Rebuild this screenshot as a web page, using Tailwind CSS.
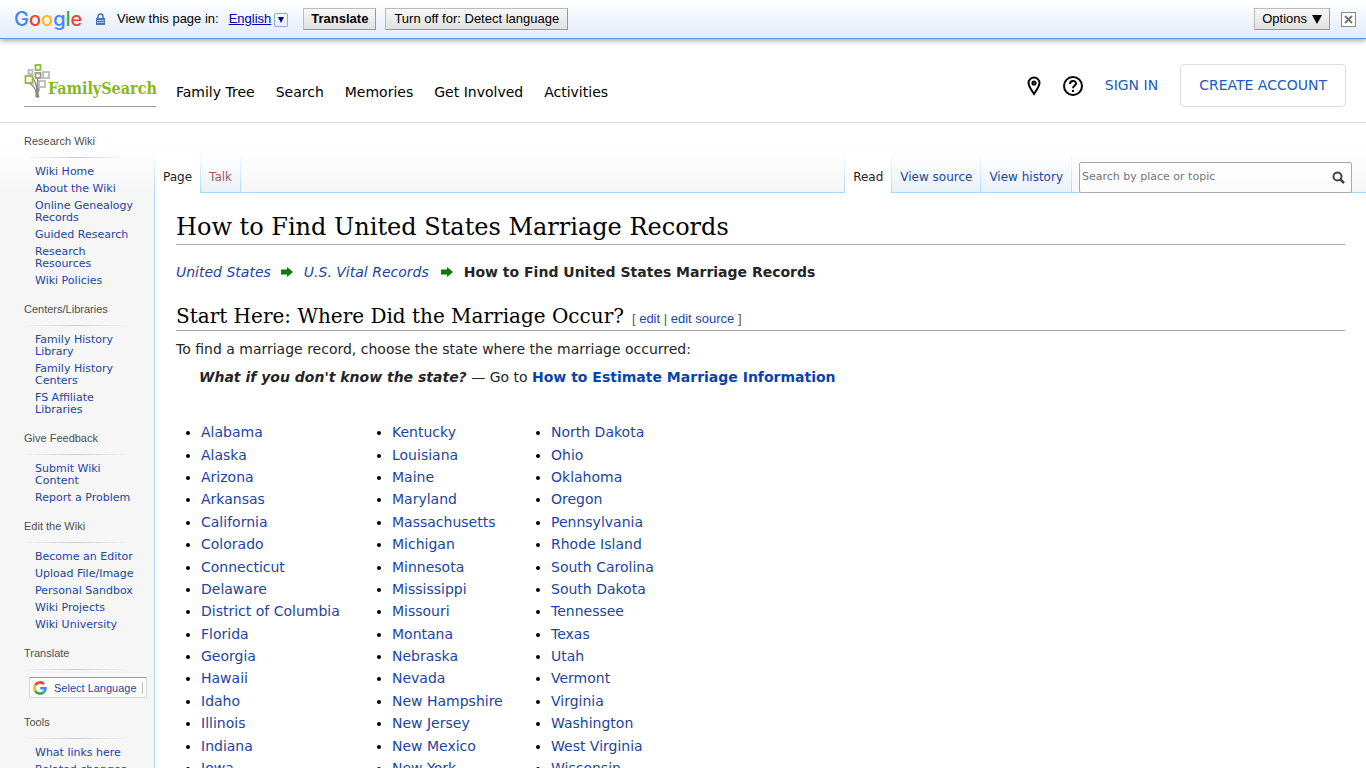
<!DOCTYPE html>
<html lang="en">
<head>
    <meta charset="UTF-8">
    <meta name="viewport" content="width=device-width, initial-scale=1.0">
    <title>How to Find United States Marriage Records</title>
    <script src="https://cdn.jsdelivr.net/npm/@tailwindcss/browser@4"></script>
</head>
<body class="bg-white text-[#252525] font-['DejaVu_Sans',sans-serif]">

    <!-- Translate bar -->
    <div class="relative z-10 flex items-center h-[39px] px-[14px] border-b border-[#6b90da] bg-linear-to-b from-white to-[#e2ecf9] shadow-[0_1px_6px_rgba(0,0,0,0.45)] text-[13px] text-black font-['Liberation_Sans',Arial,sans-serif]">
        <a href="#" class="w-[81px] text-[20px] leading-[28px] font-medium font-['Inter',sans-serif]" aria-label="Google"><span class="text-[#4285f4]">G</span><span class="text-[#ea4335]">o</span><span class="text-[#fbbc05]">o</span><span class="text-[#4285f4]">g</span><span class="text-[#34a853]">l</span><span class="text-[#ea4335]">e</span></a>
        <svg class="w-[11px] h-[12px] mr-[11px]" viewBox="0 0 11 12">
            <path d="M3 6V3.5a2.5 2.5 0 0 1 5 0V6" fill="none" stroke="#4a6fae" stroke-width="1.5"/>
            <rect x="1" y="5" width="9" height="7" fill="#4a78bd"/>
            <path d="M2 7.500h7M2 9.500h7" stroke="#a9c4ea"/>
        </svg>
        <span class="mr-[10px]">View this page in:</span>
        <button class="flex items-center gap-[3px] text-[#0000aa] mr-[15px]">
            <span class="underline">English</span>
            <span class="flex items-center justify-center w-[14px] h-[14px] mt-[2px] border border-[#8fa8d8] rounded-[2px]">
                <svg class="w-[6px] h-[6px]" viewBox="0 0 6 6"><path d="M0 0h6L3 6z" fill="#0000aa"/></svg>
            </span>
        </button>
        <button class="h-[22px] px-[7px] mr-[9px] border border-[#bbb] border-r-[#999] border-b-[#999] bg-linear-to-b from-[#f8f8f8] to-[#e0e0e0] font-bold">Translate</button>
        <button class="h-[22px] px-2 border border-[#bbb] border-r-[#999] border-b-[#999] bg-linear-to-b from-[#f8f8f8] to-[#e0e0e0]">Turn off for: Detect language</button>
        <button class="flex items-center gap-[5px] h-[22px] px-[7px] ml-auto mr-[11px] border border-[#bbb] border-r-[#999] border-b-[#999] bg-linear-to-b from-[#f8f8f8] to-[#e0e0e0]">
            Options
            <svg class="w-[10px] h-[9px]" viewBox="0 0 10 9"><path d="M0 0h10L5 9z"/></svg>
        </button>
        <button class="w-[15px] h-[15px] -mr-1 border border-[#888] bg-white" aria-label="Close">
            <svg class="w-[13px] h-[13px]" viewBox="0 0 13 13"><path d="M3 3l7 7M10 3l-7 7" stroke="#777" stroke-width="2"/></svg>
        </button>
    </div>

    <!-- Site header -->
    <header class="flex justify-between h-[84px] pl-6 pr-5 border-b border-[#ddd]">
        <div class="flex">
            <a href="#" class="flex items-end self-start w-[132px] h-[43px] mt-[25px] pb-[7px] mr-5 border-b border-[#999]" aria-label="FamilySearch">
                <svg class="w-[27px] h-[36px] -mr-[3px] shrink-0" viewBox="0 0 27 36" fill="none">
                    <path d="M13.500 35c-1.500-4-.5-7 1-9.500l3-3.500M12 34c1-6-1-9-4-12l-4-3M13 29c0-7-2-11-5-15M13.500 14v14" stroke="#8f8a82" stroke-width="1.300"/>
                    <path d="M11.500 26c1 4 .5 6 2 9l2-1c-1.500-3-1-5.500.5-8" fill="#8f8a82"/>
                    <g stroke-width="1.800">
                        <rect x="11.500" y="2" width="5" height="5" stroke="#8dbb45"/>
                        <rect x="4.500" y="7" width="4" height="4" stroke="#bbb"/>
                        <rect x="11.500" y="10" width="5" height="5" stroke="#9a958c" fill="#fff"/>
                        <rect x="19" y="9" width="6" height="6" stroke="#bbb" fill="#fff"/>
                        <rect x="1.500" y="13" width="7" height="7" stroke="#8dbb45" fill="#fff"/>
                        <rect x="15" y="18" width="6" height="6" stroke="#bbb" fill="#fff"/>
                    </g>
                </svg>
                <span class="text-[16px] leading-[20px] font-bold text-[#87b914] font-['DejaVu_Serif_Condensed','DejaVu_Serif',serif]">FamilySearch</span>
            </a>
            <nav class="flex gap-[21px] pt-[42px] text-[14px] leading-[22px] text-black">
                <a href="#">Family Tree</a>
                <a href="#">Search</a>
                <a href="#">Memories</a>
                <a href="#">Get Involved</a>
                <a href="#">Activities</a>
            </nav>
        </div>
        <div class="flex items-center h-[43px] mt-[25px] text-[14px] text-[#2258c4]">
            <a href="#" class="mr-[22px]" aria-label="Locations">
                <svg class="w-[14px] h-[20px]" viewBox="0 0 14 20" fill="none" stroke="#000" stroke-width="2">
                    <path d="M7 18C4 13.500 1.500 10 1.500 7a5.500 5.500 0 0 1 11 0c0 3-2.500 6.500-5.500 11z"/>
                    <circle cx="7" cy="7" r="1.600"/>
                </svg>
            </a>
            <a href="#" class="mr-[22px]" aria-label="Help">
                <svg class="w-[20px] h-[20px]" viewBox="0 0 20 20" fill="none" stroke="#000" stroke-width="2">
                    <circle cx="10" cy="10" r="9"/>
                    <path d="M7 8c0-4 6-4 6-.5C13 9.500 10 9.500 10 12.200M10 14v2"/>
                </svg>
            </a>
            <a href="#" class="mr-[22px]">SIGN IN</a>
            <a href="#" class="flex items-center h-[43px] px-[18px] border border-[#ddd] rounded-[4px]">CREATE ACCOUNT</a>
        </div>
    </header>

    <div class="flex bg-[linear-gradient(#fff_25px,#f6f6f6_70px)]">

        <!-- Sidebar -->
        <aside class="w-[154px] shrink-0 pl-6 pt-[10px] text-[11px] leading-[12px] text-[#0645ad]">
            <section class="mb-[10px]">
                <h3 class="leading-[16px] text-[#4d4d4d] font-['Liberation_Sans',Arial,sans-serif]">Research Wiki</h3>
                <div class="h-px w-[104px] mt-2 mb-2 bg-linear-to-r from-transparent via-[#c8ccd1] to-transparent"></div>
                <ul class="-mb-px pl-[11px] text-[#1c44a0]">
                    <li class="pb-[5px]"><a href="#">Wiki Home</a></li>
                    <li class="pb-[5px]"><a href="#">About the Wiki</a></li>
                    <li class="pb-[5px]"><a href="#">Online Genealogy<br>Records</a></li>
                    <li class="pb-[5px]"><a href="#">Guided Research</a></li>
                    <li class="pb-[5px]"><a href="#">Research<br>Resources</a></li>
                    <li class="pb-[5px]"><a href="#">Wiki Policies</a></li>
                </ul>
            </section>
            <section class="mb-[10px]">
                <h3 class="leading-[16px] text-[#4d4d4d] font-['Liberation_Sans',Arial,sans-serif]">Centers/Libraries</h3>
                <div class="h-px w-[104px] mt-2 mb-2 bg-linear-to-r from-transparent via-[#c8ccd1] to-transparent"></div>
                <ul class="-mb-px pl-[11px] text-[#1c44a0]">
                    <li class="pb-[5px]"><a href="#">Family History<br>Library</a></li>
                    <li class="pb-[5px]"><a href="#">Family History<br>Centers</a></li>
                    <li class="pb-[5px]"><a href="#">FS Affiliate<br>Libraries</a></li>
                </ul>
            </section>
            <section class="mb-[10px]">
                <h3 class="leading-[16px] text-[#4d4d4d] font-['Liberation_Sans',Arial,sans-serif]">Give Feedback</h3>
                <div class="h-px w-[104px] mt-2 mb-2 bg-linear-to-r from-transparent via-[#c8ccd1] to-transparent"></div>
                <ul class="-mb-px pl-[11px] text-[#1c44a0]">
                    <li class="pb-[5px]"><a href="#">Submit Wiki<br>Content</a></li>
                    <li class="pb-[5px]"><a href="#">Report a Problem</a></li>
                </ul>
            </section>
            <section class="mb-[10px]">
                <h3 class="leading-[16px] text-[#4d4d4d] font-['Liberation_Sans',Arial,sans-serif]">Edit the Wiki</h3>
                <div class="h-px w-[104px] mt-2 mb-2 bg-linear-to-r from-transparent via-[#c8ccd1] to-transparent"></div>
                <ul class="-mb-px pl-[11px] text-[#1c44a0]">
                    <li class="pb-[5px]"><a href="#">Become an Editor</a></li>
                    <li class="pb-[5px]"><a href="#">Upload File/Image</a></li>
                    <li class="pb-[5px]"><a href="#">Personal Sandbox</a></li>
                    <li class="pb-[5px]"><a href="#">Wiki Projects</a></li>
                    <li class="pb-[5px]"><a href="#">Wiki University</a></li>
                </ul>
            </section>
            <section class="mb-4">
                <h3 class="leading-[16px] text-[#4d4d4d] font-['Liberation_Sans',Arial,sans-serif]">Translate</h3>
                <div class="h-px w-[104px] mt-2 mb-[7px] bg-linear-to-r from-transparent via-[#c8ccd1] to-transparent"></div>
                <button class="flex items-center w-[118px] h-[21px] ml-[5px] pl-[3px] border border-[#d5d5d5] border-t-[#9b9b9b] bg-white text-[#1c44a0] whitespace-nowrap font-['Liberation_Sans',Arial,sans-serif]">
                    <svg class="w-[14px] h-[14px] mr-[7px]" viewBox="0 0 14 14" fill="none" stroke-width="2.600">
                        <path d="M2.200 4.200A5.600 5.600 0 0 1 11 3" stroke="#ea4335"/>
                        <path d="M2.200 4.200a5.600 5.600 0 0 0 0 5.600" stroke="#fbbc05"/>
                        <path d="M2.200 9.800A5.600 5.600 0 0 0 10.700 11.300" stroke="#34a853"/>
                        <path d="M10.700 11.300c1.300-1 1.800-2.600 1.800-4.100H7.200" stroke="#4285f4"/>
                    </svg>
                    Select Language
                    <span class="w-px h-3 ml-[5px] bg-[#bbb]"></span>
                </button>
            </section>
            <section>
                <h3 class="leading-[16px] text-[#4d4d4d] font-['Liberation_Sans',Arial,sans-serif]">Tools</h3>
                <div class="h-px w-[104px] mt-2 mb-2 bg-linear-to-r from-transparent via-[#c8ccd1] to-transparent"></div>
                <ul class="-mb-px pl-[11px] text-[#1c44a0]">
                    <li class="pb-[5px]"><a href="#">What links here</a></li>
                    <li class="pb-[5px]"><a href="#">Related changes</a></li>
                </ul>
            </section>
        </aside>

        <div class="flex flex-col flex-1 min-w-0">
            <!-- Page tabs and search -->
            <div class="flex justify-between items-end h-[70px] shrink-0 pr-[14px] shadow-[inset_0_-1px_#a7d7f9] text-[12px] leading-[16px] text-[#1c44a0]">
                <nav class="flex h-[40px]">
                    <a href="#" class="pt-[16px] px-2 border-l [border-image:linear-gradient(#fff,#a7d7f9)_1] bg-white text-[#222]">Page</a>
                    <a href="#" class="pt-[16px] px-2 border-x [border-image:linear-gradient(#fff,#a7d7f9)_1] bg-linear-to-b from-white to-[#e8f2f8] shadow-[inset_0_-1px_#a7d7f9] text-[#a55858]">Talk</a>
                </nav>
                <div class="flex items-end">
                    <nav class="flex h-[40px] mr-[7px]">
                        <a href="#" class="pt-[16px] px-2 border-l [border-image:linear-gradient(#fff,#a7d7f9)_1] bg-white text-[#222]">Read</a>
                        <a href="#" class="pt-[16px] px-2 border-l [border-image:linear-gradient(#fff,#a7d7f9)_1] bg-linear-to-b from-white to-[#e8f2f8] shadow-[inset_0_-1px_#a7d7f9]">View source</a>
                        <a href="#" class="pt-[16px] px-2 border-x [border-image:linear-gradient(#fff,#a7d7f9)_1] bg-linear-to-b from-white to-[#e8f2f8] shadow-[inset_0_-1px_#a7d7f9]">View history</a>
                    </nav>
                    <form class="flex items-center w-[273px] h-[31px] pl-[2px] pr-[6px] pb-px border border-[#aaa] rounded-[2px] bg-white/60">
                        <input type="search" aria-label="Search" placeholder="Search by place or topic" class="flex-1 min-w-0 text-[11px] placeholder:text-[#757575] outline-none">
                        <button aria-label="Go">
                            <svg class="w-[13px] h-[13px]" viewBox="0 0 13 13" fill="none" stroke="#444" stroke-width="2"><circle cx="5.500" cy="5.500" r="4"/><path d="M8.500 8.500l3.500 3.500" stroke-width="2.500"/></svg>
                        </button>
                    </form>
                </div>
            </div>

            <!-- Article -->
            <main class="flex-1 px-[21px] border-l border-[#a7d7f9] bg-white text-[14px] leading-[1.6]">
                <h1 class="h-[52px] pt-[16px] border-b border-[#aaa] text-[24px] leading-[36px] text-black font-['DejaVu_Serif',serif]">How to Find United States Marriage Records</h1>
                <p class="flex items-center mt-[16px]">
                    <a href="#" class="italic text-[#1c44a0]">United States</a>
                    <svg class="w-[12px] h-[11px] ml-[10px] mr-[11px]" viewBox="0 0 12 11"><path d="M0 2.500h6V0l6 5-6 5V7.500H0z" fill="#008000"/></svg>
                    <a href="#" class="italic text-[#1c44a0]">U.S. Vital Records</a>
                    <svg class="w-[12px] h-[11px] ml-[12px] mr-[11px]" viewBox="0 0 12 11"><path d="M0 2.500h6V0l6 5-6 5V7.500H0z" fill="#008000"/></svg>
                    <b>How to Find United States Marriage Records</b>
                </p>
                <h2 class="flex items-baseline h-[31px] mt-[17px] border-b border-[#aaa] text-[20px] leading-[32px] text-black font-['DejaVu_Serif',serif]">
                    Start Here: Where Did the Marriage Occur?
                    <span class="ml-2 text-[13px] text-[#555] font-['Liberation_Sans',Arial,sans-serif]">[ <a href="#" class="text-[#1c44a0]">edit</a> | <a href="#" class="text-[#1c44a0]">edit source</a> ]</span>
                </h2>
                <p class="mt-[7px]">To find a marriage record, choose the state where the marriage occurred:</p>
                <p class="mt-[5px] ml-[23px]"><b><i>What if you don't know the state?</i></b> — Go to <a href="#" class="font-bold text-[#0645ad]">How to Estimate Marriage Information</a></p>
                <div class="flex mt-[33px] pl-[25px] text-[#1c44a0]">
                    <ul class="w-[191px] list-disc marker:text-black">
                        <li><a href="#">Alabama</a></li>
                        <li><a href="#">Alaska</a></li>
                        <li><a href="#">Arizona</a></li>
                        <li><a href="#">Arkansas</a></li>
                        <li><a href="#">California</a></li>
                        <li><a href="#">Colorado</a></li>
                        <li><a href="#">Connecticut</a></li>
                        <li><a href="#">Delaware</a></li>
                        <li><a href="#">District of Columbia</a></li>
                        <li><a href="#">Florida</a></li>
                        <li><a href="#">Georgia</a></li>
                        <li><a href="#">Hawaii</a></li>
                        <li><a href="#">Idaho</a></li>
                        <li><a href="#">Illinois</a></li>
                        <li><a href="#">Indiana</a></li>
                        <li><a href="#">Iowa</a></li>
                    </ul>
                    <ul class="w-[159px] list-disc marker:text-black">
                        <li><a href="#">Kentucky</a></li>
                        <li><a href="#">Louisiana</a></li>
                        <li><a href="#">Maine</a></li>
                        <li><a href="#">Maryland</a></li>
                        <li><a href="#">Massachusetts</a></li>
                        <li><a href="#">Michigan</a></li>
                        <li><a href="#">Minnesota</a></li>
                        <li><a href="#">Mississippi</a></li>
                        <li><a href="#">Missouri</a></li>
                        <li><a href="#">Montana</a></li>
                        <li><a href="#">Nebraska</a></li>
                        <li><a href="#">Nevada</a></li>
                        <li><a href="#">New Hampshire</a></li>
                        <li><a href="#">New Jersey</a></li>
                        <li><a href="#">New Mexico</a></li>
                        <li><a href="#">New York</a></li>
                    </ul>
                    <ul class="list-disc marker:text-black">
                        <li><a href="#">North Dakota</a></li>
                        <li><a href="#">Ohio</a></li>
                        <li><a href="#">Oklahoma</a></li>
                        <li><a href="#">Oregon</a></li>
                        <li><a href="#">Pennsylvania</a></li>
                        <li><a href="#">Rhode Island</a></li>
                        <li><a href="#">South Carolina</a></li>
                        <li><a href="#">South Dakota</a></li>
                        <li><a href="#">Tennessee</a></li>
                        <li><a href="#">Texas</a></li>
                        <li><a href="#">Utah</a></li>
                        <li><a href="#">Vermont</a></li>
                        <li><a href="#">Virginia</a></li>
                        <li><a href="#">Washington</a></li>
                        <li><a href="#">West Virginia</a></li>
                        <li><a href="#">Wisconsin</a></li>
                    </ul>
                </div>
            </main>
        </div>
    </div>
</body>
</html>
